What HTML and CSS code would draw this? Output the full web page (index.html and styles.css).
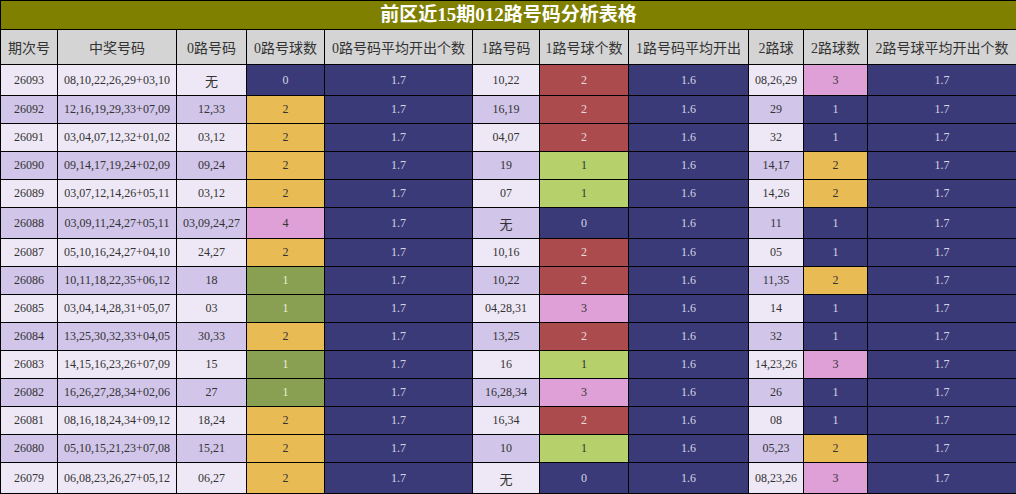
FILE: index.html
```html
<!DOCTYPE html>
<html lang="zh">
<head>
<meta charset="utf-8">
<title>前区近15期012路号码分析表格</title>
<link rel="stylesheet" href="styles.css">
</head>
<body>
<table class="grid">
<colgroup>
<col class="c1"><col class="c2"><col class="c3"><col class="c4"><col class="c5"><col class="c6"><col class="c7"><col class="c8"><col class="c9"><col class="c10"><col class="c11">
</colgroup>
<thead>
<tr class="title-row"><th colspan="11" class="title">前区近15期012路号码分析表格</th></tr>
<tr class="head-row">
<th>期次号</th><th>中奖号码</th><th>0路号码</th><th>0路号球数</th><th>0路号码平均开出个数</th><th>1路号码</th><th>1路号球个数</th><th>1路号码平均开出</th><th>2路球</th><th>2路球数</th><th>2路号球平均开出个数</th>
</tr>
</thead>
<tbody>
<tr class="tall lt"><td>26093</td><td>08,10,22,26,29+03,10</td><td class="cjk">无</td><td class="navy">0</td><td class="navy">1.7</td><td>10,22</td><td class="red">2</td><td class="navy">1.6</td><td>08,26,29</td><td class="pink">3</td><td class="navy">1.7</td></tr>
<tr class="dk"><td>26092</td><td>12,16,19,29,33+07,09</td><td>12,33</td><td class="yel">2</td><td class="navy">1.7</td><td>16,19</td><td class="red">2</td><td class="navy">1.6</td><td>29</td><td class="navy">1</td><td class="navy">1.7</td></tr>
<tr class="lt"><td>26091</td><td>03,04,07,12,32+01,02</td><td>03,12</td><td class="yel">2</td><td class="navy">1.7</td><td>04,07</td><td class="red">2</td><td class="navy">1.6</td><td>32</td><td class="navy">1</td><td class="navy">1.7</td></tr>
<tr class="dk"><td>26090</td><td>09,14,17,19,24+02,09</td><td>09,24</td><td class="yel">2</td><td class="navy">1.7</td><td>19</td><td class="lgreen">1</td><td class="navy">1.6</td><td>14,17</td><td class="yel">2</td><td class="navy">1.7</td></tr>
<tr class="lt"><td>26089</td><td>03,07,12,14,26+05,11</td><td>03,12</td><td class="yel">2</td><td class="navy">1.7</td><td>07</td><td class="lgreen">1</td><td class="navy">1.6</td><td>14,26</td><td class="yel">2</td><td class="navy">1.7</td></tr>
<tr class="tall dk"><td>26088</td><td>03,09,11,24,27+05,11</td><td>03,09,24,27</td><td class="pink">4</td><td class="navy">1.7</td><td class="cjk">无</td><td class="navy">0</td><td class="navy">1.6</td><td>11</td><td class="navy">1</td><td class="navy">1.7</td></tr>
<tr class="lt"><td>26087</td><td>05,10,16,24,27+04,10</td><td>24,27</td><td class="yel">2</td><td class="navy">1.7</td><td>10,16</td><td class="red">2</td><td class="navy">1.6</td><td>05</td><td class="navy">1</td><td class="navy">1.7</td></tr>
<tr class="dk"><td>26086</td><td>10,11,18,22,35+06,12</td><td>18</td><td class="olive">1</td><td class="navy">1.7</td><td>10,22</td><td class="red">2</td><td class="navy">1.6</td><td>11,35</td><td class="yel">2</td><td class="navy">1.7</td></tr>
<tr class="lt"><td>26085</td><td>03,04,14,28,31+05,07</td><td>03</td><td class="olive">1</td><td class="navy">1.7</td><td>04,28,31</td><td class="pink">3</td><td class="navy">1.6</td><td>14</td><td class="navy">1</td><td class="navy">1.7</td></tr>
<tr class="dk"><td>26084</td><td>13,25,30,32,33+04,05</td><td>30,33</td><td class="yel">2</td><td class="navy">1.7</td><td>13,25</td><td class="red">2</td><td class="navy">1.6</td><td>32</td><td class="navy">1</td><td class="navy">1.7</td></tr>
<tr class="lt"><td>26083</td><td>14,15,16,23,26+07,09</td><td>15</td><td class="olive">1</td><td class="navy">1.7</td><td>16</td><td class="lgreen">1</td><td class="navy">1.6</td><td>14,23,26</td><td class="pink">3</td><td class="navy">1.7</td></tr>
<tr class="dk"><td>26082</td><td>16,26,27,28,34+02,06</td><td>27</td><td class="olive">1</td><td class="navy">1.7</td><td>16,28,34</td><td class="pink">3</td><td class="navy">1.6</td><td>26</td><td class="navy">1</td><td class="navy">1.7</td></tr>
<tr class="lt"><td>26081</td><td>08,16,18,24,34+09,12</td><td>18,24</td><td class="yel">2</td><td class="navy">1.7</td><td>16,34</td><td class="red">2</td><td class="navy">1.6</td><td>08</td><td class="navy">1</td><td class="navy">1.7</td></tr>
<tr class="dk"><td>26080</td><td>05,10,15,21,23+07,08</td><td>15,21</td><td class="yel">2</td><td class="navy">1.7</td><td>10</td><td class="lgreen">1</td><td class="navy">1.6</td><td>05,23</td><td class="yel">2</td><td class="navy">1.7</td></tr>
<tr class="tall lt"><td>26079</td><td>06,08,23,26,27+05,12</td><td>06,27</td><td class="yel">2</td><td class="navy">1.7</td><td class="cjk">无</td><td class="navy">0</td><td class="navy">1.6</td><td>08,23,26</td><td class="pink">3</td><td class="navy">1.7</td></tr>
</tbody>
</table>
</body>
</html>
```
FILE: styles.css
```css
html, body {
  margin: 0;
  padding: 0;
  background: #ffffff;
}
.grid {
  width: 1016px;
  border-collapse: collapse;
  table-layout: fixed;
  font-family: "Liberation Serif", "Noto Sans CJK SC", serif;
  color: #333333;
}
.c1 { width: 57px; }
.c2 { width: 119px; }
.c3 { width: 70px; }
.c4 { width: 78px; }
.c5 { width: 148px; }
.c6 { width: 67px; }
.c7 { width: 89px; }
.c8 { width: 120px; }
.c9 { width: 55px; }
.c10 { width: 64px; }
.c11 { width: 149px; }
.grid th, .grid td {
  border: 1px solid #000000;
  padding: 0;
  text-align: center;
  vertical-align: middle;
  white-space: nowrap;
  overflow: hidden;
}
.title-row { height: 29px; }
.title {
  background: #808000;
  color: #ffffff;
  font-size: 19px;
  font-weight: bold;
  line-height: 22px;
}
.head-row { height: 35px; }
.head-row th {
  background: #d4d4d4;
  font-weight: normal;
  font-size: 14px;
  color: #333333;
}
.grid tbody tr { height: 28px; }
.grid tbody tr.tall { height: 31px; }
.grid td {
  font-size: 12px;
}
.grid td.cjk { font-size: 13px; }
.lt td { background: #eee8f6; }
.dk td { background: #d1c5e9; }
.grid td.navy { background: #3a3a78; color: #d4d4e4; }
.grid td.yel { background: #e8bb55; color: #333333; }
.grid td.pink { background: #df9fd7; color: #333333; }
.grid td.red { background: #ac4b4e; color: #e6dcdc; }
.grid td.lgreen { background: #b6d16c; color: #333333; }
.grid td.olive { background: #89a052; color: #e8ecdc; }
```
